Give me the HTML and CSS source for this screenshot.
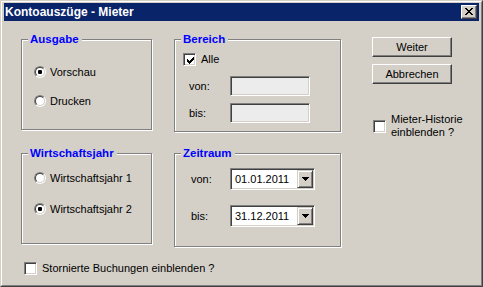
FILE: index.html
```html
<!DOCTYPE html>
<html lang="de">
<head>
<meta charset="utf-8">
<title>Kontoauszüge - Mieter</title>
<link rel="stylesheet" href="styles.css">
</head>
<body>
<div class="window">
  <div class="frame">
    <div class="titlebar">
      <span class="title">Kontoauszüge - Mieter</span>
      <span class="close">
        <svg class="close-x" width="8" height="7" viewBox="0 0 8 7" shape-rendering="crispEdges">
          <rect x="0" y="0" width="2" height="1"/><rect x="6" y="0" width="2" height="1"/>
          <rect x="1" y="1" width="2" height="1"/><rect x="5" y="1" width="2" height="1"/>
          <rect x="2" y="2" width="4" height="1"/>
          <rect x="3" y="3" width="2" height="1"/>
          <rect x="2" y="4" width="4" height="1"/>
          <rect x="1" y="5" width="2" height="1"/><rect x="5" y="5" width="2" height="1"/>
          <rect x="0" y="6" width="2" height="1"/><rect x="6" y="6" width="2" height="1"/>
        </svg>
      </span>
    </div>
    <div class="client">
      <div class="layout">
        <div class="group g-ausgabe">
          <div class="legend">Ausgabe</div>
          <div class="options opt-ausgabe">
            <div class="opt"><span class="radio checked"></span><span class="opt-label">Vorschau</span></div>
            <div class="opt"><span class="radio"></span><span class="opt-label">Drucken</span></div>
          </div>
        </div>

        <div class="group g-bereich">
          <div class="legend">Bereich</div>
          <div class="check-row alle-row">
            <span class="checkbox checked">
              <svg width="7" height="7" viewBox="0 0 7 7" shape-rendering="crispEdges"><polygon points="0,2 2,4 7,-1 7,2 2,7 0,5"/></svg>
            </span>
            <span class="check-label">Alle</span>
          </div>
          <div class="fields f-bereich">
            <span class="f-label">von:</span><span class="textbox"></span>
            <span class="f-label">bis:</span><span class="textbox"></span>
          </div>
        </div>

        <div class="side">
          <div class="button">Weiter</div>
          <div class="button">Abbrechen</div>
          <div class="check-row hist-row">
            <span class="checkbox"></span>
            <span class="check-label two-line">Mieter-Historie<br>einblenden ?</span>
          </div>
        </div>

        <div class="group g-wj">
          <div class="legend">Wirtschaftsjahr</div>
          <div class="options opt-wj">
            <div class="opt"><span class="radio"></span><span class="opt-label">Wirtschaftsjahr 1</span></div>
            <div class="opt"><span class="radio checked"></span><span class="opt-label">Wirtschaftsjahr 2</span></div>
          </div>
        </div>

        <div class="group g-zeit">
          <div class="legend">Zeitraum</div>
          <div class="fields f-zeit">
            <span class="f-label">von:</span>
            <div class="combo"><span class="combo-text">01.01.2011</span><span class="combo-btn"><svg width="7" height="4" viewBox="0 0 7 4" shape-rendering="crispEdges"><rect x="0" y="0" width="7" height="1"/><rect x="1" y="1" width="5" height="1"/><rect x="2" y="2" width="3" height="1"/><rect x="3" y="3" width="1" height="1"/></svg></span></div>
            <span class="f-label">bis:</span>
            <div class="combo"><span class="combo-text">31.12.2011</span><span class="combo-btn"><svg width="7" height="4" viewBox="0 0 7 4" shape-rendering="crispEdges"><rect x="0" y="0" width="7" height="1"/><rect x="1" y="1" width="5" height="1"/><rect x="2" y="2" width="3" height="1"/><rect x="3" y="3" width="1" height="1"/></svg></span></div>
          </div>
        </div>
      </div>

      <div class="check-row bottom-row">
        <span class="checkbox"></span>
        <span class="check-label">Stornierte Buchungen einblenden ?</span>
      </div>
    </div>
  </div>
</div>
</body>
</html>
```
FILE: styles.css
```css
* { box-sizing: border-box; }
html, body { margin: 0; padding: 0; }
body {
  width: 483px;
  height: 287px;
  overflow: hidden;
  background: #d4d0c8;
  font-family: "Liberation Sans", Arial, sans-serif;
  font-size: 11px;
  color: #000;
}
.window {
  width: 483px;
  height: 287px;
  border: 1px solid;
  border-color: #d4d0c8 #404040 #404040 #d4d0c8;
  background: #d4d0c8;
}
.frame {
  height: 100%;
  border: 1px solid;
  border-color: #fff #808080 #808080 #fff;
  padding: 1px 2px 2px 2px;
  display: flex;
  flex-direction: column;
}
.titlebar {
  height: 18px;
  flex: none;
  background: #0a246a;
  display: flex;
  align-items: center;
  justify-content: space-between;
  padding: 0 2px 0 1px;
}
.title {
  color: #fff;
  font-weight: bold;
  font-size: 12px;
  line-height: 14px;
}
.close {
  width: 16px;
  height: 14px;
  background: #d4d0c8;
  border: 1px solid;
  border-color: #fff #404040 #404040 #fff;
  box-shadow: inset -1px -1px 0 #808080;
  display: flex;
  align-items: center;
  justify-content: center;
  padding: 0 1px 1px 0;
}
.close-x { display: block; fill: #000; }

.client { flex: 1; }
.layout {
  display: grid;
  grid-template-columns: 131px 167px 100px;
  grid-template-rows: 93px 94px;
  column-gap: 22px;
  row-gap: 21px;
  padding: 18px 0 0 17px;
}
.g-ausgabe { grid-area: 1 / 1; height: 91px; }
.g-bereich { grid-area: 1 / 2; height: 93px; }
.side { grid-area: 1 / 3 / 3 / 4; margin-left: 9px; }
.g-wj { grid-area: 2 / 1; height: 91px; }
.g-zeit { grid-area: 2 / 2; height: 94px; }

.group {
  border: 1px solid #808080;
  box-shadow: inset 1px 1px 0 #fff, 1px 1px 0 #fff;
  display: flex;
  flex-direction: column;
  align-items: flex-start;
}
.legend {
  margin: -8px 0 0 6px;
  padding: 0 3px 0 2px;
  background: #d4d0c8;
  color: #0000ff;
  font-weight: bold;
  font-size: 11.5px;
  line-height: 14px;
}

.options { display: flex; flex-direction: column; padding-left: 12px; }
.opt-ausgabe { margin-top: 18px; gap: 13px; }
.opt-wj { margin-top: 10px; gap: 15px; }
.opt { height: 16px; display: flex; align-items: center; }
.opt-label { margin-left: 4px; line-height: 13px; }

.radio {
  position: relative;
  width: 12px;
  height: 12px;
  border-radius: 50%;
  border: 1px solid;
  border-color: #808080 #fff #fff #808080;
  flex: none;
}
.radio::after {
  content: "";
  position: absolute;
  inset: 0;
  border-radius: 50%;
  border: 1px solid;
  border-color: #404040 #d4d0c8 #d4d0c8 #404040;
  background: #fff;
}
.radio.checked::after {
  background: radial-gradient(circle at 50% 50%, #000 0 2px, #fff 2.4px);
}

.check-row { display: flex; align-items: center; }
.checkbox {
  width: 13px;
  height: 13px;
  flex: none;
  background: #fff;
  border: 1px solid;
  border-color: #808080 #fff #fff #808080;
  box-shadow: inset 1px 1px 0 #404040, inset -1px -1px 0 #d4d0c8;
  display: flex;
  align-items: center;
  justify-content: center;
  padding: 1px 0 0 1px;
}
.checkbox svg { display: block; fill: #000; }
.check-label { margin-left: 5px; line-height: 13px; white-space: nowrap; }

.alle-row { margin: 7px 0 0 8px; }

.fields {
  display: grid;
  align-items: center;
}
.f-bereich {
  grid-template-columns: 41px 80px;
  grid-auto-rows: 20px;
  row-gap: 7px;
  margin-top: 10px;
  padding-left: 14px;
}
.f-zeit {
  grid-template-columns: 39px 85px;
  grid-auto-rows: 22px;
  row-gap: 15px;
  margin-top: 8px;
  padding-left: 16px;
}
.f-label { line-height: 13px; }
.textbox {
  height: 20px;
  background: #ececec;
  border: 1px solid;
  border-color: #808080 #fff #fff #808080;
  box-shadow: inset 1px 1px 0 #404040, inset -1px -1px 0 #d4d0c8;
}
.combo {
  height: 22px;
  background: #fff;
  border: 1px solid;
  border-color: #808080 #fff #fff #808080;
  box-shadow: inset 1px 1px 0 #404040, inset -1px -1px 0 #d4d0c8;
  padding: 1px;
  display: flex;
  align-items: stretch;
}
.combo-text {
  flex: 1;
  padding-left: 3px;
  font-size: 11px;
  line-height: 19px;
}
.combo-btn {
  width: 16px;
  background: #d4d0c8;
  border: 1px solid;
  border-color: #d4d0c8 #404040 #404040 #d4d0c8;
  box-shadow: inset 1px 1px 0 #fff, inset -1px -1px 0 #808080;
  display: flex;
  align-items: center;
  justify-content: center;
}
.combo-btn svg { display: block; fill: #000; }

.side { display: flex; flex-direction: column; align-items: flex-start; }
.button {
  width: 80px;
  height: 20px;
  border: 1px solid;
  border-color: #fff #404040 #404040 #fff;
  box-shadow: inset -1px -1px 0 #808080;
  display: flex;
  align-items: center;
  justify-content: center;
  line-height: 13px;
  margin-bottom: 7px;
}
.button:first-child { margin-top: -2px; }
.hist-row { margin: 22px 0 0 1px; }
.two-line { line-height: 13px; }

.bottom-row { margin: 15px 0 0 20px; }
```
